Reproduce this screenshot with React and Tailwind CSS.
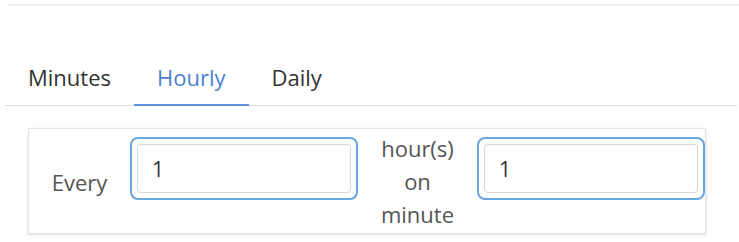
import { useState } from 'react';

function App() {
  const [tab, setTab] = useState('Hourly');
  const [hours, setHours] = useState('1');
  const [minute, setMinute] = useState('1');

  const tabs = ['Minutes', 'Hourly', 'Daily'];

  return (
    <div className="w-[739px] h-[242px] bg-white text-[#555] overflow-hidden" style={{ fontFamily: '"Open Sans", "Noto Sans", sans-serif' }}>
      <div className="ml-[7px] mt-[4px] h-[2px] bg-[#f2f2f2]" />

      <div className="mt-[52px] ml-[5px] mr-[2px] flex border-b border-[#dcdcdc]">
        {tabs.map((t) => (
          <button
            key={t}
            onClick={() => setTab(t)}
            className={
              'px-[23px] h-[48px] pb-[8px] text-[22px] leading-none -mb-px border-b-2 ' +
              (t === tab ? 'text-[#4a7fd0] border-[#5b93d3]' : 'text-[#333] border-transparent')
            }
          >
            {t}
          </button>
        ))}
      </div>

      <div className="mt-[22px] ml-[28px] w-[678px] h-[106px] border border-[#e3e3e3] shadow-[0_1px_3px_rgba(0,0,0,0.12)] flex items-start text-[22px]">
        <div className="w-[101px] self-center text-center mt-[3px]">Every</div>
        <div className="w-[228px] mt-[8px] h-[63px] rounded-[8px] border-2 border-[#6aa6e0] p-[5px]">
          <input
            value={hours}
            onChange={(e) => setHours(e.target.value)}
            className="w-full h-full rounded-[4px] border border-[#d6d6d6] pl-[14px] text-[21px] text-[#333] outline-none"
          />
        </div>
        <div className="w-[119px] text-center leading-[33px] mt-[3px]">
          hour(s)
          <br />
          on
          <br />
          minute
        </div>
        <div className="w-[228px] mt-[8px] h-[63px] rounded-[8px] border-2 border-[#6aa6e0] p-[5px]">
          <input
            value={minute}
            onChange={(e) => setMinute(e.target.value)}
            className="w-full h-full rounded-[4px] border border-[#d6d6d6] pl-[14px] text-[21px] text-[#333] outline-none"
          />
        </div>
      </div>
    </div>
  );
}

export default App;
